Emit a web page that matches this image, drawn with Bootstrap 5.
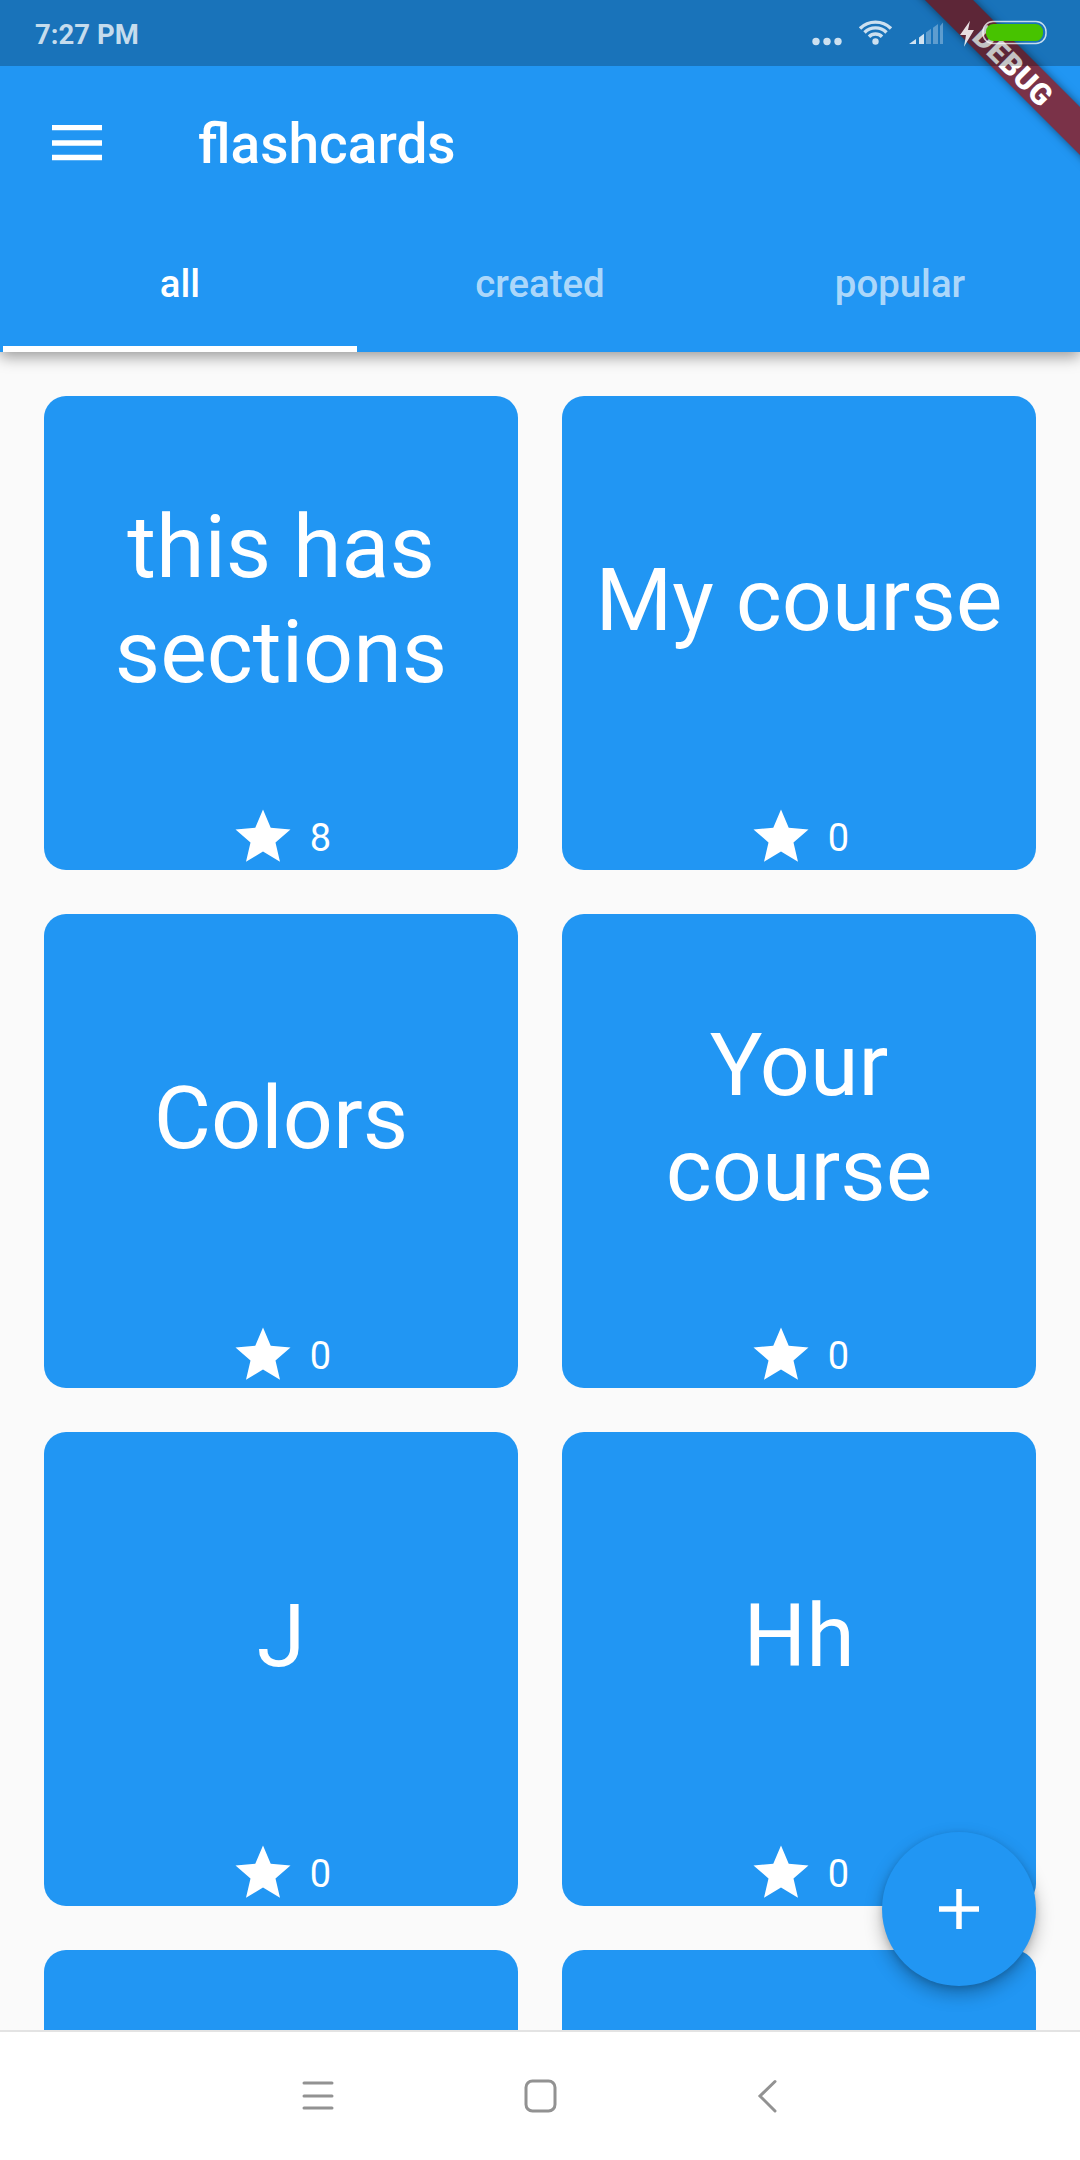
<!DOCTYPE html>
<html lang="en">
<head>
<meta charset="utf-8">
<title>flashcards</title>
<link href="https://cdn.jsdelivr.net/npm/bootstrap@5.3.0/dist/css/bootstrap.min.css" rel="stylesheet">
<style>
html,body{margin:0;height:2160px;overflow:hidden;background:#fafafa;font-family:Roboto,sans-serif}
.phone{height:2160px;width:1080px;position:relative;overflow:hidden}
.appbar{background:#2196f3;height:352px;box-shadow:0 5px 14px rgba(0,0,0,.38);position:relative;flex:none}
.statusbar{height:66px;background:rgba(0,0,0,.23);padding:0 0 0 35px;position:relative;z-index:6}
.clock{font-size:27.500px;font-weight:700;color:rgba(255,255,255,.76);line-height:1;margin-top:4px}
.sysicons{position:absolute;left:0;top:0}
.toolrow{height:154px;padding-left:52px}
.apptitle{font-size:55px;font-weight:500;color:#fff;margin:2px 0 0 94px;line-height:1}
.tabrow{height:132px}
.tabitem{width:360px;height:132px;display:flex;align-items:center;justify-content:center;font-size:38.400px;font-weight:500;color:rgba(255,255,255,.65);padding:0 0 4px;border:0;background:none;position:relative}
.tabitem.active{color:#fff}
.tabitem.active::after{content:"";position:absolute;left:3px;right:3px;bottom:0;height:6px;background:#fff}
.deck{flex:1 1 0;overflow:hidden;padding:44px 44px 0;display:grid;grid-template-columns:474px 474px;grid-auto-rows:474px;gap:44px;background:#fafafa}
.deckcard{background:#2196f3;border:0;border-radius:22px;color:#fff;height:474px;position:relative}
.decktitle{flex:1 1 0;font-size:88px;line-height:105px;text-align:center;padding:0 20px 2px}
.deckmeta{height:66px;margin-bottom:0;font-size:38px;line-height:1;padding-right:1px}
.deckmeta span{margin-left:14px;margin-top:1px}
.navstrip{height:130px;background:#fff;border-top:2px solid #e3e3e3;flex:none;position:relative;z-index:3}
.fab{position:absolute;left:882px;top:1832px;width:154px;height:154px;padding:0;border:0;background:#2196f3;box-shadow:0 8px 18px rgba(0,0,0,.28),0 2px 6px rgba(0,0,0,.14);z-index:4}
.fab:hover,.fab:active{background:#2196f3}
.ribbon{position:absolute;left:817px;top:51px;width:400px;height:34px;padding-right:8px;background:#7a3248;transform:rotate(45deg);box-shadow:0 0 8px rgba(0,0,0,.5);z-index:5;color:#fff;font-weight:900;font-size:30px;line-height:38px;text-align:center;letter-spacing:.5px;overflow:visible}
</style>
</head>
<body>
<div class="phone d-flex flex-column">
  <header class="appbar">
    <div class="statusbar d-flex align-items-center">
      <div class="clock">7:27 PM</div>
      <svg class="sysicons" width="1080" height="66" viewBox="0 0 1080 66" aria-hidden="true">
        <g fill="#fff" fill-opacity=".78">
          <circle cx="816" cy="41.5" r="3.7"/><circle cx="827" cy="41.5" r="3.7"/><circle cx="838" cy="41.5" r="3.7"/>
          <circle cx="875.5" cy="41.5" r="3.2"/>
        </g>
        <g fill="none" stroke="#fff" stroke-opacity=".78" stroke-width="3.4">
          <path d="M860 28.5a22 22 0 0 1 31 0"/>
          <path d="M864.5 32.5a15.5 15.5 0 0 1 22 0"/>
          <path d="M869 36.8a9 9 0 0 1 13 0"/>
        </g>
        <path d="M909 44l7-5v5z" fill="#fff" fill-opacity=".8"/>
        <path d="M919 37.5l5-3.7v10.200h-5z" fill="#fff" fill-opacity=".8"/>
        <path d="M926 32.500l5-3.700v15.200h-5z" fill="#fff" fill-opacity=".3"/>
        <path d="M933 27.800l5-3.700v19.900h-5z" fill="#fff" fill-opacity=".3"/>
        <path d="M940 26l3-3.500v21.500h-3z" fill="#fff" fill-opacity=".3"/>
        <path d="M970 20.700 960 35h6l-2 11.700L974 30h-6z" fill="#fff" fill-opacity=".85"/>
        <rect x="983" y="21.500" width="63" height="22" rx="10" fill="none" stroke="#fff" stroke-opacity=".75" stroke-width="1.500"/>
        <rect x="986" y="24" width="57" height="17" rx="7.500" fill="#47c300"/>
      </svg>
    </div>
    <nav class="toolrow d-flex align-items-center">
      <svg width="52" height="36" viewBox="0 0 52 36" aria-hidden="true"><path d="M0 2.500h50M0 18h50M0 32.500h50" stroke="#fff" stroke-width="5.500" fill="none"/></svg>
      <h1 class="apptitle">flashcards</h1>
    </nav>
    <div class="tabrow d-flex" role="tablist">
      <button class="tabitem active" role="tab">all</button>
      <button class="tabitem" role="tab">created</button>
      <button class="tabitem" role="tab">popular</button>
    </div>
  </header>
  <div class="ribbon">DEBUG</div>
  <main class="deck">
    <div class="card deckcard"><div class="decktitle d-flex align-items-center justify-content-center">this has sections</div><div class="deckmeta d-flex align-items-center justify-content-center"><svg width="66" height="66" viewBox="0 0 24 24" aria-hidden="true"><path d="M12 17.270 18.180 21l-1.640-7.030L22 9.240l-7.190-.610L12 2 9.190 8.630 2 9.240l5.460 4.730L5.820 21z" fill="#fff"/></svg><span>8</span></div></div>
    <div class="card deckcard"><div class="decktitle d-flex align-items-center justify-content-center">My course</div><div class="deckmeta d-flex align-items-center justify-content-center"><svg width="66" height="66" viewBox="0 0 24 24" aria-hidden="true"><path d="M12 17.270 18.180 21l-1.640-7.030L22 9.240l-7.190-.610L12 2 9.190 8.630 2 9.240l5.460 4.730L5.820 21z" fill="#fff"/></svg><span>0</span></div></div>
    <div class="card deckcard"><div class="decktitle d-flex align-items-center justify-content-center">Colors</div><div class="deckmeta d-flex align-items-center justify-content-center"><svg width="66" height="66" viewBox="0 0 24 24" aria-hidden="true"><path d="M12 17.270 18.180 21l-1.640-7.030L22 9.240l-7.190-.610L12 2 9.190 8.630 2 9.240l5.460 4.730L5.820 21z" fill="#fff"/></svg><span>0</span></div></div>
    <div class="card deckcard"><div class="decktitle d-flex align-items-center justify-content-center">Your course</div><div class="deckmeta d-flex align-items-center justify-content-center"><svg width="66" height="66" viewBox="0 0 24 24" aria-hidden="true"><path d="M12 17.270 18.180 21l-1.640-7.030L22 9.240l-7.190-.610L12 2 9.190 8.630 2 9.240l5.460 4.730L5.820 21z" fill="#fff"/></svg><span>0</span></div></div>
    <div class="card deckcard"><div class="decktitle d-flex align-items-center justify-content-center">J</div><div class="deckmeta d-flex align-items-center justify-content-center"><svg width="66" height="66" viewBox="0 0 24 24" aria-hidden="true"><path d="M12 17.270 18.180 21l-1.640-7.030L22 9.240l-7.190-.610L12 2 9.190 8.630 2 9.240l5.460 4.730L5.820 21z" fill="#fff"/></svg><span>0</span></div></div>
    <div class="card deckcard"><div class="decktitle d-flex align-items-center justify-content-center">Hh</div><div class="deckmeta d-flex align-items-center justify-content-center"><svg width="66" height="66" viewBox="0 0 24 24" aria-hidden="true"><path d="M12 17.270 18.180 21l-1.640-7.030L22 9.240l-7.190-.610L12 2 9.190 8.630 2 9.240l5.460 4.730L5.820 21z" fill="#fff"/></svg><span>0</span></div></div>
    <div class="card deckcard"></div>
    <div class="card deckcard"></div>
  </main>
  <button class="btn fab rounded-circle d-flex align-items-center justify-content-center" aria-label="add">
    <svg width="40" height="40" viewBox="0 0 40 40" aria-hidden="true"><path d="M20 0v40M0 20h40" stroke="#fff" stroke-width="5.500" fill="none"/></svg>
  </button>
  <footer class="navstrip d-flex align-items-center justify-content-center">
    <svg width="1080" height="128" viewBox="0 0 1080 128" aria-hidden="true">
      <g fill="none" stroke="#929292" stroke-linecap="round">
        <path d="M304 51h28M304 64h28M304 76h28" stroke-width="3"/>
        <rect x="526" y="49" width="29" height="30" rx="6.500" stroke-width="3"/>
        <path d="M775 49.500 760 64l15 15" stroke-width="3"/>
      </g>
    </svg>
  </footer>
</div>
<script src="https://cdn.jsdelivr.net/npm/bootstrap@5.3.0/dist/js/bootstrap.bundle.min.js"></script>
</body>
</html>
